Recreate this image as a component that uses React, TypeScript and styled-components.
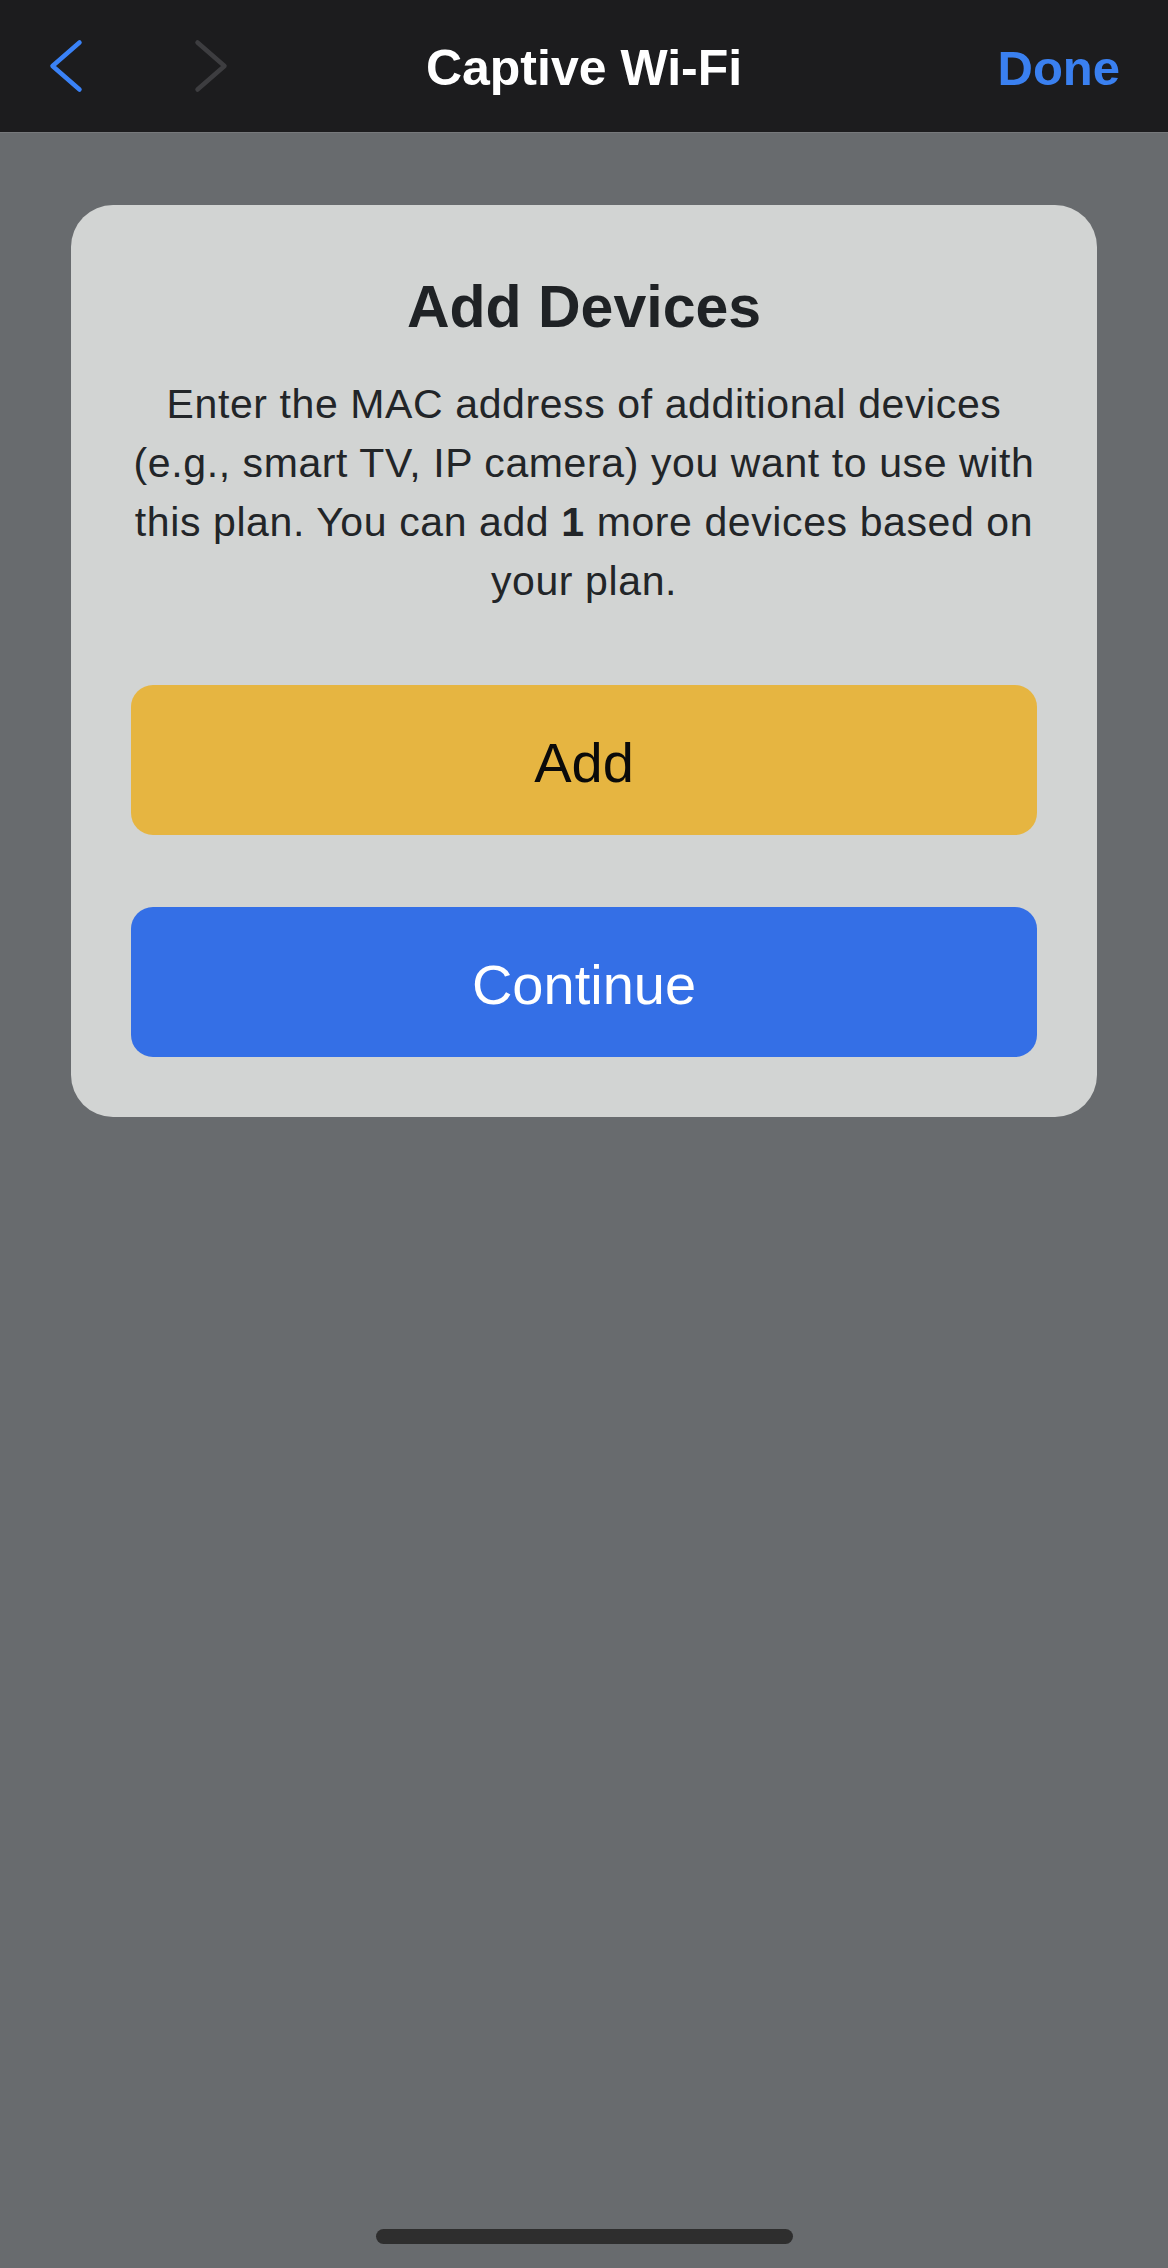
import React from "react";
import styled, { createGlobalStyle } from "styled-components";

const GlobalStyle = createGlobalStyle`
  html, body {
    margin: 0;
    padding: 0;
    background: #686b6e;
  }
  body {
    font-family: "Liberation Sans", Arial, Helvetica, sans-serif;
    -webkit-font-smoothing: antialiased;
  }
  * { box-sizing: border-box; }
`;

const Page = styled.div`
  min-height: 100vh;
  display: flex;
  flex-direction: column;
  background: #686b6e;
`;

const NavBar = styled.header`
  height: 133px;
  background: #1c1c1e;
  border-bottom: 1px solid #77797c;
  display: grid;
  grid-template-columns: 1fr auto 1fr;
  align-items: center;
  padding: 0 48px;
`;

const NavGroup = styled.div`
  display: flex;
  align-items: center;
  gap: 109px;
`;

const NavTitle = styled.h1`
  margin: 0;
  padding-top: 3px;
  font-size: 50px;
  line-height: 58px;
  font-weight: 700;
  color: #ffffff;
`;

const DoneButton = styled.button`
  justify-self: end;
  background: none;
  border: none;
  padding: 3px 0 0;
  font-family: inherit;
  font-size: 49px;
  line-height: 58px;
  font-weight: 700;
  color: #3a80f0;
  cursor: pointer;
`;

const Chevron = styled.svg`
  display: block;
  width: 36px;
  height: 56px;
`;

const Card = styled.section`
  margin: 72px 71px 0;
  background: #d2d4d3;
  border-radius: 42px;
  padding: 68px 60px 60px;
  display: flex;
  flex-direction: column;
  align-items: stretch;
`;

const Title = styled.h2`
  margin: 0;
  text-align: center;
  font-size: 59px;
  line-height: 68px;
  font-weight: 700;
  color: #1f2225;
`;

const Description = styled.p`
  margin: 34px 0 0;
  text-align: center;
  font-size: 41px;
  line-height: 59px;
  letter-spacing: 0.6px;
  font-weight: 400;
  color: #222528;

  strong {
    font-weight: 700;
  }
`;

const Actions = styled.div`
  margin-top: 74px;
  display: flex;
  flex-direction: column;
  gap: 72px;
`;

const ActionButton = styled.button<{ $variant: "add" | "continue" }>`
  height: 150px;
  padding: 4px 0 0;
  border: none;
  border-radius: 22px;
  font-family: inherit;
  font-size: 56px;
  font-weight: 400;
  cursor: pointer;
  background: ${(p) => (p.$variant === "add" ? "#e6b541" : "#346fe6")};
  color: ${(p) => (p.$variant === "add" ? "#0a0a0a" : "#ffffff")};
`;

const Spacer = styled.div`
  flex: 1;
`;

const HomeIndicator = styled.div`
  align-self: center;
  width: 417px;
  height: 15px;
  border-radius: 8px;
  background: #2e2e2e;
  margin-bottom: 24px;
`;

export default function App() {
  return (
    <>
      <GlobalStyle />
      <Page>
        <NavBar>
          <NavGroup>
            <Chevron viewBox="0 0 36 56" aria-label="Back">
              <path
                d="M31.5 4.5 L4.5 28 L31.5 51.5"
                fill="none"
                stroke="#3a82f7"
                strokeWidth="4.5"
                strokeLinecap="round"
                strokeLinejoin="round"
              />
            </Chevron>
            <Chevron viewBox="0 0 36 56" aria-label="Forward">
              <path
                d="M4.5 4.5 L31.5 28 L4.5 51.5"
                fill="none"
                stroke="#3d3d40"
                strokeWidth="4.5"
                strokeLinecap="round"
                strokeLinejoin="round"
              />
            </Chevron>
          </NavGroup>
          <NavTitle>Captive Wi-Fi</NavTitle>
          <DoneButton>Done</DoneButton>
        </NavBar>

        <Card>
          <Title>Add Devices</Title>
          <Description>
            Enter the MAC address of additional devices
            <br />
            (e.g., smart TV, IP camera) you want to use with
            <br />
            this plan. You can add <strong>1</strong> more devices based on
            <br />
            your plan.
          </Description>
          <Actions>
            <ActionButton $variant="add">Add</ActionButton>
            <ActionButton $variant="continue">Continue</ActionButton>
          </Actions>
        </Card>

        <Spacer />
        <HomeIndicator />
      </Page>
    </>
  );
}
